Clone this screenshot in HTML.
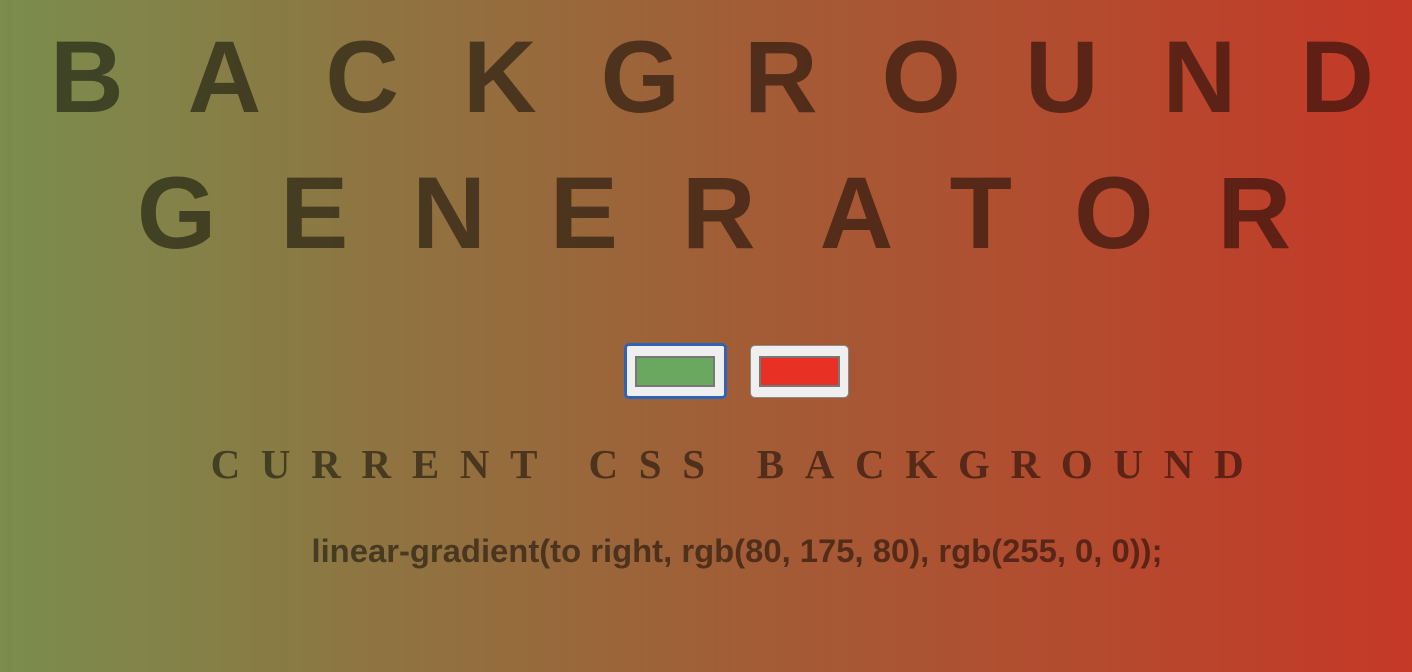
<!DOCTYPE html>
<html><head><meta charset="utf-8"><style>
html,body{margin:0;padding:0}
body{width:1412px;height:672px;overflow:hidden;background:linear-gradient(to right,rgb(122,141,77),rgb(160,95,55) 50%,rgb(197,57,39));font-family:"Liberation Sans",Arial,sans-serif;color:rgba(0,0,0,0.5);position:relative}
.t{position:absolute;left:0;width:1412px;margin:0;text-align:center;font-weight:bold;font-size:102px;line-height:136px;letter-spacing:64px;white-space:nowrap}
.b{position:absolute;box-sizing:border-box;background:#efeff0;border-radius:5px}
.b i{position:absolute;box-sizing:border-box;border:2px solid #777}
h3{position:absolute;left:0;width:1412px;top:436px;margin:0;text-align:center;font-family:"Liberation Serif",serif;font-weight:bold;font-size:41px;line-height:56px;letter-spacing:20.7px;text-indent:63px;white-space:nowrap}
p{position:absolute;left:0;width:1412px;top:531px;margin:0;text-align:center;font-weight:bold;font-size:32.8px;line-height:40px;white-space:nowrap;text-indent:62px}
</style></head><body>
<div class="t" style="top:9px;text-indent:50px">BACKGROUND</div>
<div class="t" style="top:145px;text-indent:80px">GENERATOR</div>
<div class="b" style="left:624px;top:343px;width:103px;height:56px;border:3px solid #2f63b8;">
<i style="left:8px;top:10px;width:80px;height:31px;background:#6aa85f"></i></div>
<div class="b" style="left:750px;top:345px;width:99px;height:53px;border:1px solid #8a8a8a;">
<i style="left:8px;top:10px;width:81px;height:31px;background:#e83025"></i></div>
<h3>CURRENT CSS BACKGROUND</h3>
<p>linear-gradient(to right, rgb(80, 175, 80), rgb(255, 0, 0));</p>
</body></html>
